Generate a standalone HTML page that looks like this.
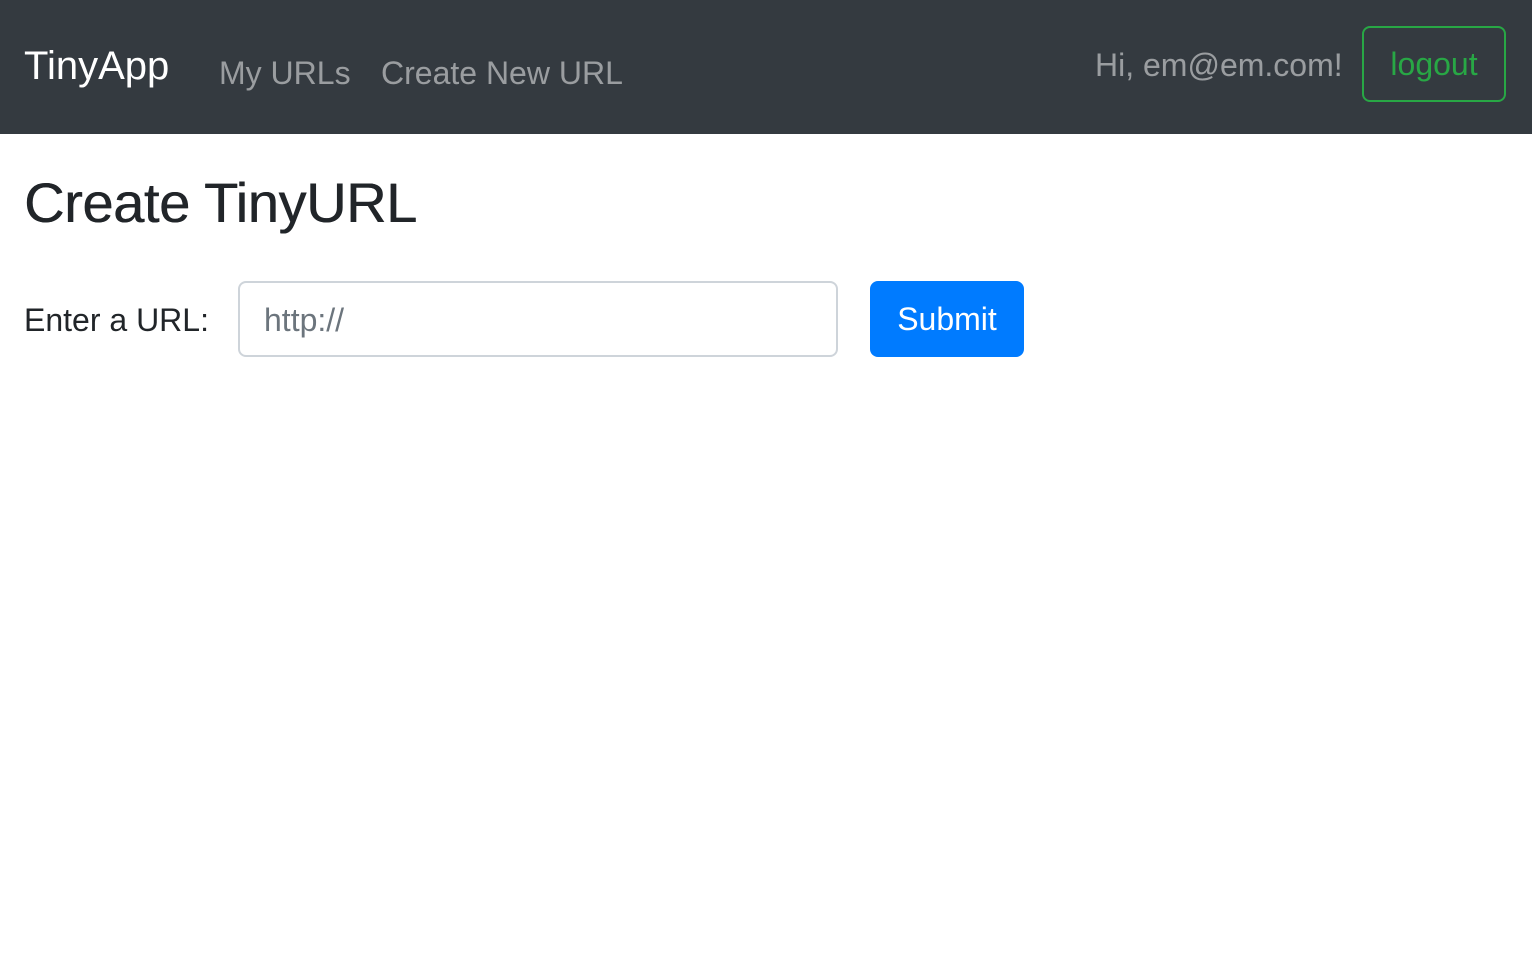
<!DOCTYPE html>
<html><head><meta charset="utf-8"><style>
*{box-sizing:border-box;margin:0;padding:0}
body{width:1532px;height:968px;background:#fff;font-family:"Liberation Sans",sans-serif;color:#212529;position:relative;overflow:hidden}
.nav{position:absolute;left:0;top:0;width:1532px;height:134px;background:#343a40}
.a{position:absolute;white-space:nowrap;line-height:1}
</style></head><body>
<div class="nav">
<div class="a" style="left:24px;top:46px;font-size:40px;color:#fff">TinyApp</div>
<div class="a" style="left:219px;top:57px;font-size:32px;color:rgba(255,255,255,.5)">My URLs</div>
<div class="a" style="left:381px;top:57px;font-size:32px;color:rgba(255,255,255,.5)">Create New URL</div>
<div class="a" style="left:1095px;top:49px;font-size:32px;color:rgba(255,255,255,.5)">Hi, em@em.com!</div>
<div style="position:absolute;left:1362px;top:26px;width:144px;height:76px;border:2px solid #28a745;border-radius:8px;color:#28a745;font-size:32px;display:flex;align-items:center;justify-content:center">logout</div>
</div>
<div class="a" style="left:24px;top:175px;font-size:56px;letter-spacing:-0.4px;font-weight:bold;-webkit-text-stroke:0;font-weight:normal;text-shadow:0.5px 0 0 #212529">Create TinyURL</div>
<div class="a" style="left:24px;top:304px;font-size:32px">Enter a URL:</div>
<div style="position:absolute;left:238px;top:281px;width:600px;height:76px;border:2px solid #ced4da;border-radius:8px"></div>
<div class="a" style="left:264px;top:304px;font-size:32px;color:#6c757d">http://</div>
<div style="position:absolute;left:870px;top:281px;width:154px;height:76px;background:#007bff;border-radius:8px;color:#fff;font-size:32px;display:flex;align-items:center;justify-content:center">Submit</div>
</body></html>
